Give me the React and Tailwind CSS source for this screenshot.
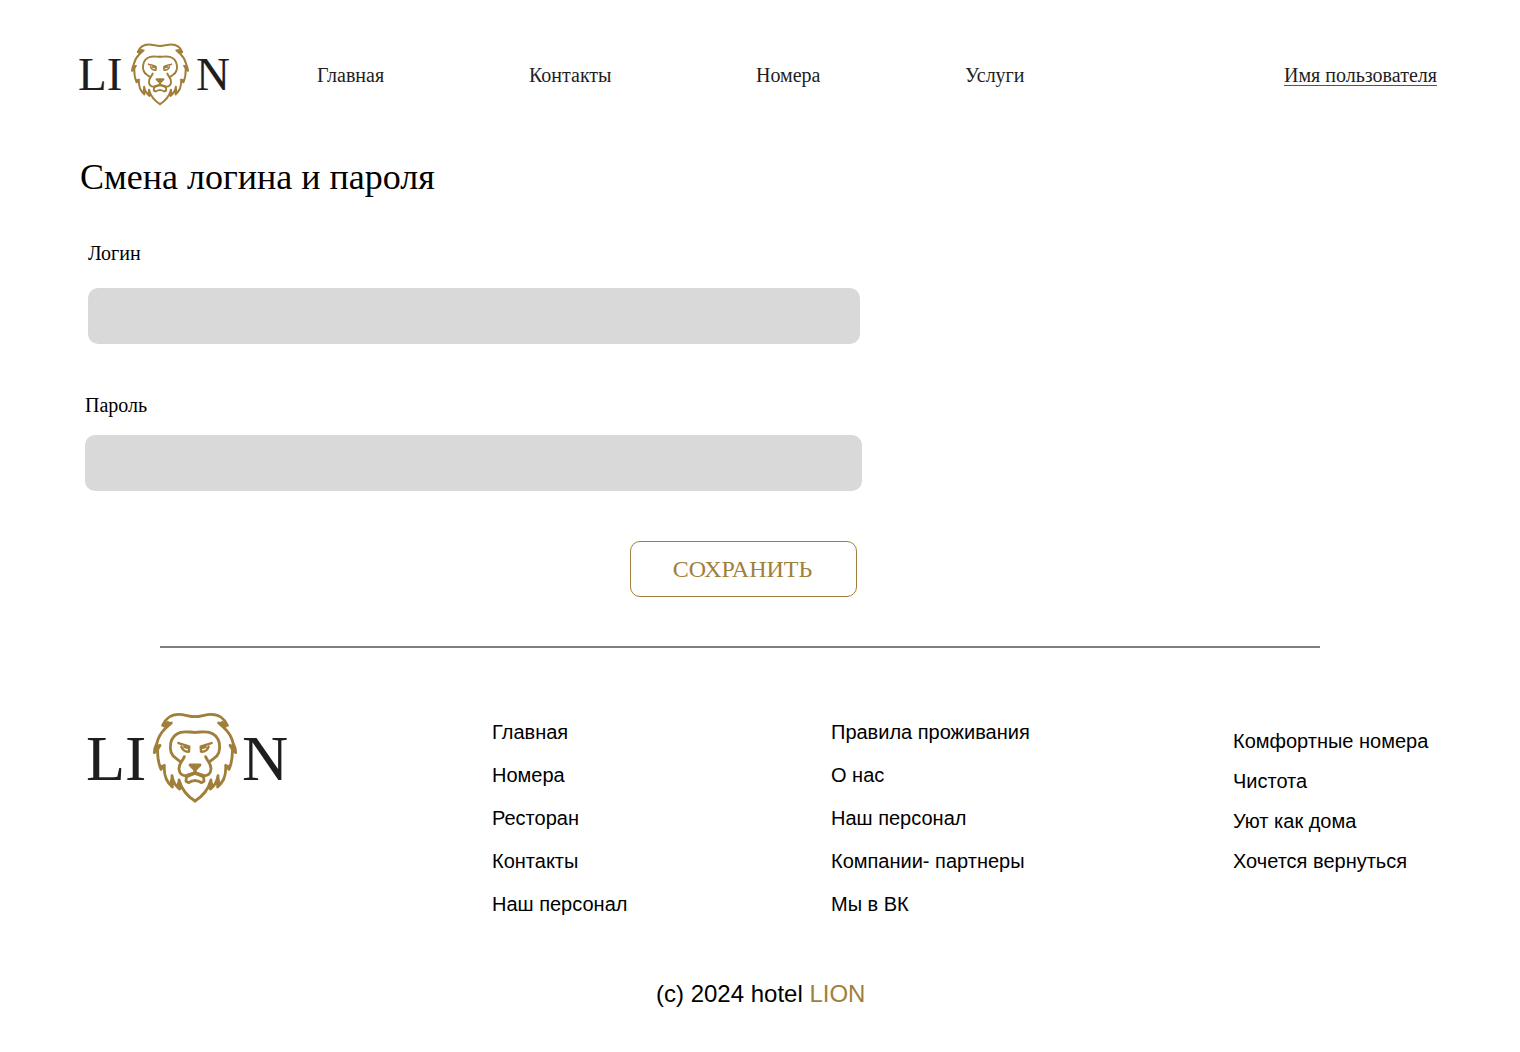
const MANE =
  'M135 26 C117 26 105 19 86 19 C64 19 46 32 38 52 L64 45 L45 62 C32 75 24 90 21 105 C16 115 13 124 13 134 L30 112 L23 124 C22 148 26 168 33 184 L43 172 C41 202 51 224 67 237 L66 203 C69 222 77 234 89 243 L87 216 C95 245 114 266 135 279';
const TUFTS =
  'M38 52 L52 40 L64 45 L46 60 Z M13 134 L20 110 L30 112 L23 124 Z M33 184 L30 172 L43 172 Z M67 237 L59 226 L66 203 Z M89 243 L79 234 L87 216 Z';
const FACE =
  'M135 73 C119 73 106 69 92 73 C74 78 65 90 62 106 C59 124 63 142 78 151 L90 160';
const CHEEK = 'M103 146 C98 160 86 166 87 183 C88 198 98 205 110 202 L135 194';
const EYE = 'M85 105 C95 109 106 110 118 116 L117 131 C107 132 98 127 94 116 M103 117 L112 120';
const MOUTH = 'M135 188 V196 C126 200 116 202 109 207 L108 220 L116 224 C123 219 129 218 135 218';

function Half() {
  return (
    <>
      <path d={MANE} />
      <path d={TUFTS} fill="#a07f3a" strokeWidth="3" />
      <path d={FACE} />
      <path d={CHEEK} />
      <path d={EYE} strokeWidth="7" />
      <path d={MOUTH} />
    </>
  );
}

function Lion({ className }) {
  return (
    <svg viewBox="0 0 270 300" className={className} fill="none" stroke="#a07f3a" strokeWidth="8.5" strokeLinecap="round" strokeLinejoin="round">
      <Half />
      <g transform="translate(270 0) scale(-1 1)">
        <Half />
      </g>
      <path d="M120 171 H150 L135 186 Z" fill="#a07f3a" />
    </svg>
  );
}

const links = [
  ['Главная', 'Номера', 'Ресторан', 'Контакты', 'Наш персонал'],
  ['Правила проживания', 'О нас', 'Наш персонал', 'Компании- партнеры', 'Мы в ВК'],
];
const perks = ['Комфортные номера', 'Чистота', 'Уют как дома', 'Хочется вернуться'];

export default function App() {
  return (
    <div className="h-[1052px] w-[1520px] overflow-hidden bg-white font-['Liberation_Serif',serif] text-black">
      <header className="flex h-[150px] text-xl leading-6 text-[#1e1e1e]">
        <div className="flex w-[317px] shrink-0 pl-[78px] text-[47px] leading-[54px]">
          <span className="mt-[47px] w-[51px]">LI</span>
          <Lion className="mt-[40px] h-[69px] w-[62px] shrink-0" />
          <span className="mt-[47px] ml-[5px]">N</span>
        </div>
        <nav className="mt-[63px] flex w-[967px] shrink-0">
          <a className="w-[212px]">Главная</a>
          <a className="w-[227px]">Контакты</a>
          <a className="w-[209px]">Номера</a>
          <a>Услуги</a>
        </nav>
        <a className="mt-[63px] whitespace-nowrap underline decoration-[#555] decoration-1 underline-offset-[3px] [text-decoration-skip-ink:none]">Имя пользователя</a>
      </header>

      <main className="h-[496px]">
        <h1 className="pt-[7px] pl-[80px] text-4xl leading-[41px]">Смена логина и пароля</h1>
        <form className="flex flex-col">
          <label htmlFor="login" className="mt-[43px] ml-[88px] text-xl leading-6">Логин</label>
          <input id="login" className="mt-[23px] ml-[88px] h-[56px] w-[772px] rounded-[10px] bg-[#d9d9d9] px-4" />
          <label htmlFor="password" className="mt-[49px] ml-[85px] text-xl leading-6">Пароль</label>
          <input id="password" type="password" className="mt-[18px] ml-[85px] h-[56px] w-[777px] rounded-[10px] bg-[#d9d9d9] px-4" />
          <button type="button" className="mt-[50px] ml-[630px] h-[56px] w-[227px] rounded-[10px] border border-[#a07f3a] pr-[2px] text-2xl text-[#a07f3a]">СОХРАНИТЬ</button>
        </form>
      </main>

      <footer>
        <div className="ml-[160px] h-[2px] w-[1160px] bg-[#7f7f7f]" />
        <div className="flex h-[312px] font-['Liberation_Sans',sans-serif] text-xl leading-[23px]">
          <div className="flex w-[492px] shrink-0 pl-[86px] font-['Liberation_Serif',serif] text-[64px] leading-[74px] text-[#1e1e1e]">
            <span className="mt-[74px] w-[64px]">LI</span>
            <Lion className="mt-[60px] h-[100px] w-[90px] shrink-0" />
            <span className="mt-[74px] ml-[2px]">N</span>
          </div>
          <ul className="mt-[73px] flex w-[339px] shrink-0 flex-col gap-5">
            {links[0].map((t) => <li key={t}>{t}</li>)}
          </ul>
          <ul className="mt-[73px] flex w-[402px] shrink-0 flex-col gap-5">
            {links[1].map((t) => <li key={t}>{t}</li>)}
          </ul>
          <ul className="mt-[82px] flex flex-col gap-[17px] whitespace-nowrap">
            {perks.map((t) => <li key={t}>{t}</li>)}
          </ul>
        </div>
        <p className="mt-[20px] pl-[656px] font-['Liberation_Sans',sans-serif] text-2xl leading-7">
          (c) 2024 hotel <span className="text-[#a07f3a]">LION</span>
        </p>
      </footer>
    </div>
  );
}
